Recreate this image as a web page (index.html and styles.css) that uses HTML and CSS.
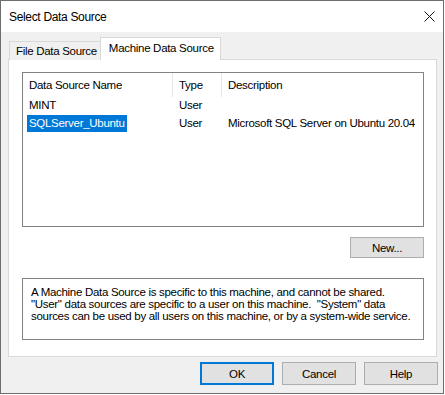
FILE: index.html
```html
<!DOCTYPE html>
<html lang="en">

<head>
    <meta charset="UTF-8">
    <title>Select Data Source</title>
    <link rel="stylesheet" href="styles.css">
</head>

<body>
    <div class="window">
        <div class="titlebar">
            <span class="title">Select Data Source</span>
            <svg class="close" width="11" height="11" viewBox="0 0 11 11">
                <path d="M0.5 0.5 L10.5 10.5 M10.5 0.5 L0.5 10.5" stroke="#111" stroke-width="1" fill="none" />
            </svg>
        </div>

        <div class="client">
            <div class="tabs">
                <div class="tab">File Data Source</div>
                <div class="tab active">Machine Data Source</div>
            </div>

            <div class="panel">
                <div class="listview">
                    <div class="lv-head">
                        <div class="col c1">Data Source Name</div>
                        <div class="col c2">Type</div>
                        <div class="col c3">Description</div>
                    </div>
                    <div class="lv-row">
                        <div class="col c1"><span class="cell">MINT</span></div>
                        <div class="col c2">User</div>
                        <div class="col c3"></div>
                    </div>
                    <div class="lv-row">
                        <div class="col c1"><span class="cell selected">SQLServer_Ubuntu</span></div>
                        <div class="col c2">User</div>
                        <div class="col c3">Microsoft SQL Server on Ubuntu 20.04</div>
                    </div>
                </div>

                <div class="panel-actions">
                    <button class="btn">New...</button>
                </div>

                <div class="note">
                    A Machine Data Source is specific to this machine, and cannot be shared.<br>
                    "User" data sources are specific to a user on this machine. &nbsp;"System" data<br>
                    sources can be used by all users on this machine, or by a system-wide service.
                </div>
            </div>

            <div class="footer">
                <button class="btn default">OK</button>
                <button class="btn">Cancel</button>
                <button class="btn">Help</button>
            </div>
        </div>
    </div>
</body>

</html>
```

FILE: styles.css
```css
* {
    box-sizing: border-box;
}

body {
    margin: 0;
    font-family: "Liberation Sans", Arial, sans-serif;
    font-size: 11.5px;
    letter-spacing: -0.3px;
    color: #000;
    background: #fff;
}

.window {
    width: 444px;
    height: 394px;
    border: 1px solid #6e6e6e;
    background: #f0f0f0;
    display: flex;
    flex-direction: column;
}

.titlebar {
    height: 31px;
    background: #fff;
    display: flex;
    align-items: center;
    justify-content: space-between;
    padding: 0 8px 0 8px;
    font-size: 12px;
    letter-spacing: -0.33px;
}

.close {
    display: block;
}

.client {
    padding: 5px 6px 0 7px;
}

/* tabs */
.tabs {
    display: flex;
    align-items: flex-end;
    height: 23px;
    position: relative;
    z-index: 1;
}

.tab {
    height: 19px;
    line-height: 18px;
    padding: 0 3px 0 6px;
    margin-left: 1px;
    border: 1px solid #d9d9d9;
    border-bottom: 0;
    background: #f0f0f0;
    white-space: nowrap;
}

.tab.active {
    height: 23px;
    line-height: 21px;
    padding: 0 6px 0 8px;
    margin-left: -1px;
    background: #fff;
}

.panel {
    margin-top: -1px;
    height: 298px;
    border: 1px solid #d9d9d9;
    background: #fff;
    padding: 12px 12px 0 13px;
}

/* list view */
.listview {
    height: 155px;
    border: 1px solid #828282;
}

.lv-head,
.lv-row {
    display: flex;
}

.lv-head {
    height: 24px;
    align-items: center;
}

.lv-head .col {
    height: 100%;
    line-height: 24px;
    border-right: 1px solid #e5e5e5;
}

.lv-head .col.c3 {
    border-right: 0;
}

.lv-row {
    height: 17.5px;
    line-height: 17px;
}

.col {
    padding-left: 6px;
    white-space: nowrap;
}

.c1 {
    width: 150px;
    flex-shrink: 0;
}

.c2 {
    width: 49px;
    flex-shrink: 0;
}

.c3 {
    flex: 1;
    min-width: 0;
}

.lv-row .c1 {
    padding-left: 4px;
}

.cell {
    display: inline-block;
    padding: 0 2px 0 2px;
}

.cell.selected {
    background: #0078d7;
    color: #fff;
}

/* buttons */
.btn {
    font: inherit;
    letter-spacing: inherit;
    color: #000;
    width: 74px;
    height: 21px;
    padding: 0;
    background: #e1e1e1;
    border: 1px solid #adadad;
}

.panel-actions {
    display: flex;
    justify-content: flex-end;
    margin-top: 10px;
}

.note {
    margin-top: 20px;
    height: 62px;
    border: 1px solid #828282;
    padding: 7px 8px 0;
    line-height: 12px;
    white-space: nowrap;
}

.footer {
    display: flex;
    justify-content: flex-end;
    gap: 8px;
    margin: 5px -1px 0 0;
}

.footer .btn {
    height: 23px;
}

.btn.default {
    border: 2px solid #0078d7;
}
```
